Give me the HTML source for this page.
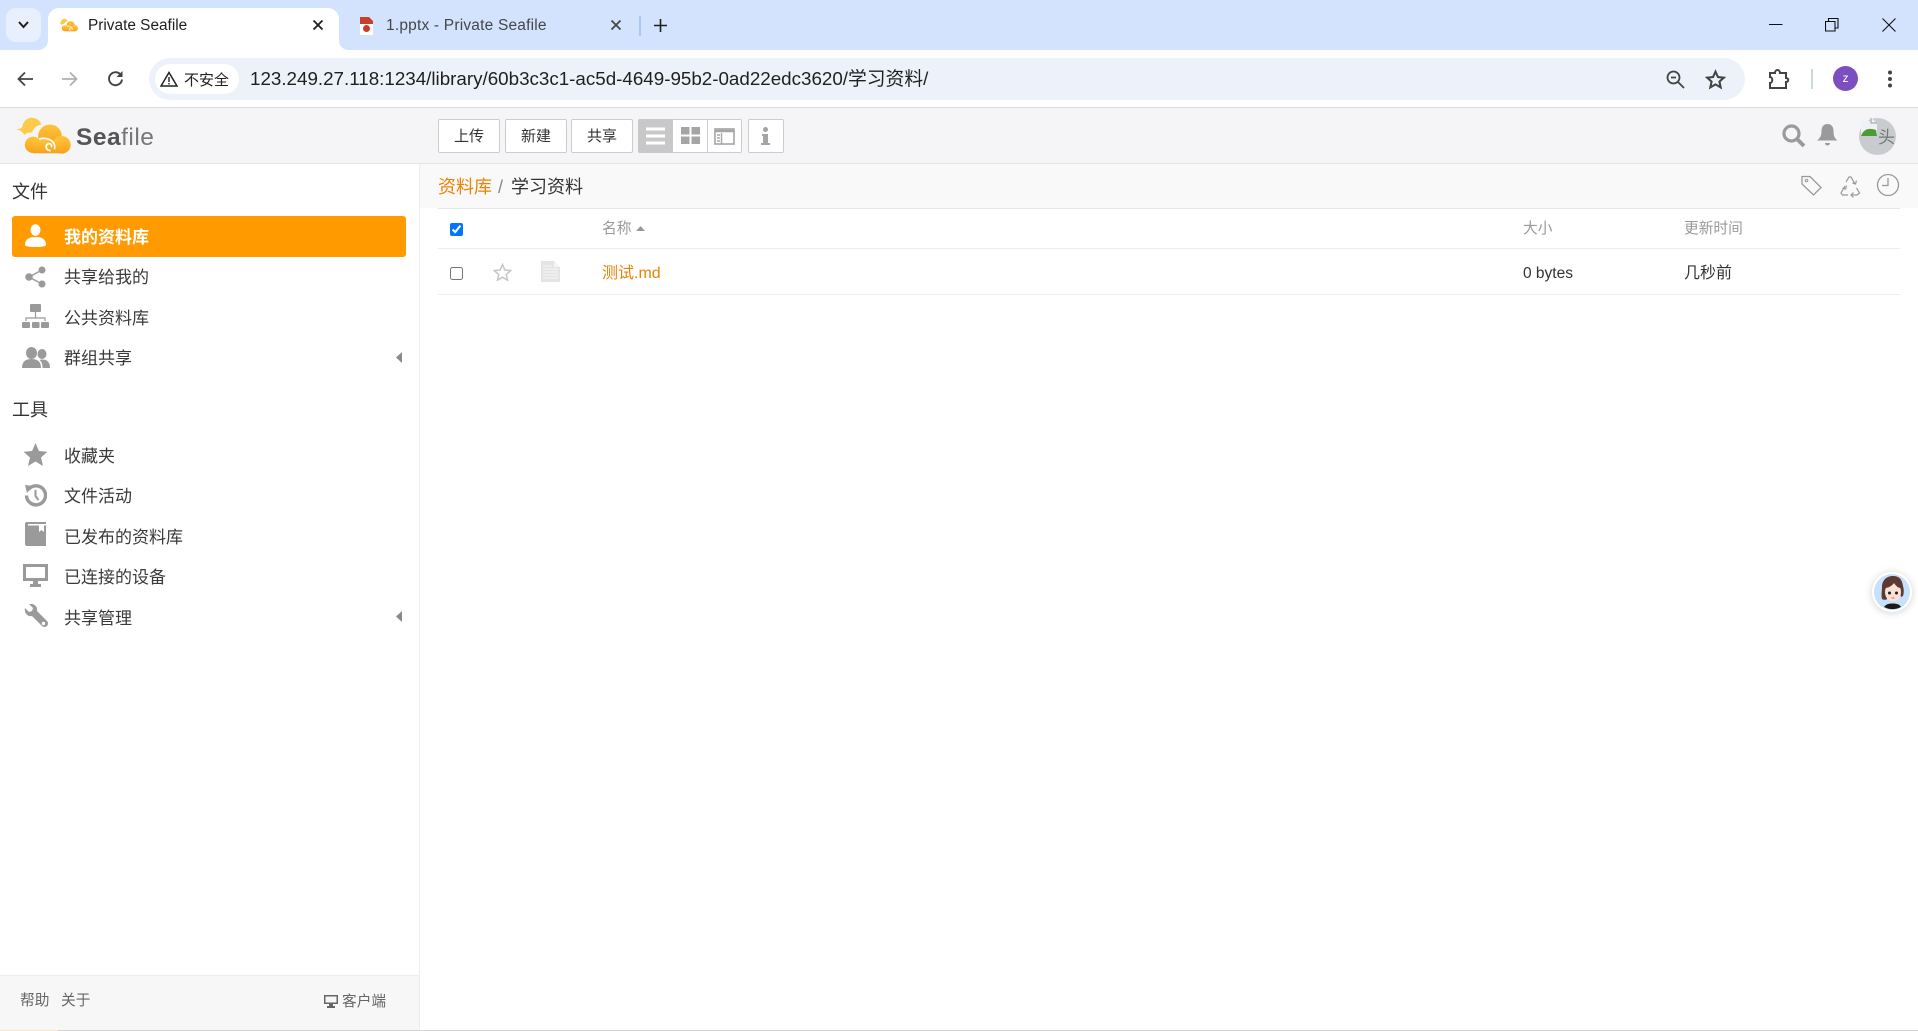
<!DOCTYPE html>
<html lang="zh"><head><meta charset="utf-8"><title>Private Seafile</title>
<style>
html,body{margin:0;padding:0;width:1918px;height:1031px;overflow:hidden;background:#fff}
body{position:relative;font-family:"Liberation Sans","Noto Sans CJK SC",sans-serif;color:#333}
.a,.t,svg{position:absolute}
.t{white-space:nowrap;line-height:24px;height:24px}
.s{font-size:17px;color:#3a3a3a;left:64px}
.b{position:absolute;top:119px;height:32px;background:#fff;border:1px solid #ccc;border-radius:2px;text-align:center;line-height:34px;font-size:15px;color:#333}
</style></head><body>
<svg width="0" height="0" style="position:absolute"><defs>
<linearGradient id="g" x1="0" y1="0" x2="0" y2="1"><stop offset="0" stop-color="#fdc43a"/><stop offset="1" stop-color="#f9a01e"/></linearGradient>
<symbol id="logo" viewBox="20 15 175 115">
<path fill="#fdca4a" d="M25 55c8-1 14-3 19-8 1-15 13-27 27-27 14 0 25 8 29 20-14 2-24 11-28 24-9-1-17 1-23 7-3-9-12-15-24-16z"/>
<circle cx="125" cy="75" r="35" fill="url(#g)"/><circle cx="160" cy="100" r="26" fill="url(#g)"/><circle cx="75" cy="100" r="24" fill="url(#g)"/><rect x="75" y="85" width="85" height="40" fill="url(#g)"/>
<path fill="none" stroke="#fff" stroke-width="5" d="M127 117c-9 0-14-6-13-13 1-6 7-9 12-7 4 2 5 7 2 9M93 83c14-4 30-2 39 7 7 7 9 16 6 23"/>
</symbol>
</defs></svg>

<!-- tab strip -->
<div class="a" style="left:0;top:0;width:1918px;height:50px;background:#d3e3fd"></div>
<div class="a" style="left:6px;top:8px;width:35px;height:34px;background:#e8f0fe;border-radius:10px"></div>
<svg style="left:17px;top:20px" width="13" height="10" viewBox="0 0 13 10"><path d="M2 2l4.500 5L11 2" fill="none" stroke="#1f1f1f" stroke-width="2"/></svg>
<div class="a" style="left:48px;top:8px;width:291px;height:42px;background:#fff;border-radius:11px 11px 0 0"></div>
<svg class="a" style="left:38px;top:40px" width="10" height="10"><path d="M0 10C6 10 10 6 10 0V10Z" fill="#fff"/></svg>
<svg class="a" style="left:339px;top:40px" width="10" height="10"><path d="M10 10C4 10 0 6 0 0V10Z" fill="#fff"/></svg>
<svg style="left:58px;top:18px" width="21" height="14"><use href="#logo" width="21" height="14"/></svg>
<div class="t" style="left:88px;top:14px;font-size:15.400px;color:#1f1f1f">Private Seafile</div>
<svg style="left:312px;top:19px" width="12" height="12"><path d="M1.500 1.500l9 9m0-9l-9 9" stroke="#1f1f1f" stroke-width="1.800"/></svg>
<svg style="left:359px;top:17px" width="15" height="18" viewBox="0 0 15 18"><rect x="1" y="6" width="13" height="12" fill="#fff"/><path d="M1 0h9l4 4v3H1z" fill="#c8402a"/><circle cx="7.500" cy="11.500" r="3.500" fill="#d0392a"/></svg>
<div class="t" style="left:386px;top:14px;font-size:15.500px;color:#44474a;letter-spacing:.2px">1.pptx - Private Seafile</div>
<svg style="left:610px;top:19px" width="12" height="12"><path d="M1.500 1.500l9 9m0-9l-9 9" stroke="#444" stroke-width="1.700"/></svg>
<div class="a" style="left:639px;top:16px;width:2px;height:20px;background:#a8c7fa"></div>
<svg style="left:654px;top:19px" width="13" height="13"><path d="M6.500 0v13M0 6.500h13" stroke="#1f1f1f" stroke-width="1.600"/></svg>
<svg style="left:1769px;top:18px" width="14" height="14"><path d="M0 6.500h13.500" stroke="#111" stroke-width="1"/></svg>
<svg style="left:1825px;top:18px" width="14" height="14"><path d="M.5 3.500h9.500v9.500H.5zM3.500 3.500V.5h9.500v9.500H10" fill="none" stroke="#111" stroke-width="1.100"/></svg>
<svg style="left:1882px;top:18px" width="14" height="14"><path d="M.5.500l13 13m0-13l-13 13" stroke="#111" stroke-width="1.100"/></svg>

<!-- toolbar -->
<div class="a" style="left:0;top:50px;width:1918px;height:58px;background:#fff;border-radius:12px 12px 0 0;border-bottom:1px solid #dcdcdc;box-sizing:border-box"></div>
<svg style="left:15px;top:69px" width="20" height="20"><path d="M18 10H4M10 3.500L3.500 10l6.500 6.500" fill="none" stroke="#444" stroke-width="1.800"/></svg>
<svg style="left:60px;top:69px" width="20" height="20"><path d="M2 10h14M10 3.500l6.500 6.500-6.500 6.500" fill="none" stroke="#b0b0b0" stroke-width="1.800"/></svg>
<svg style="left:106px;top:69px" width="20" height="20"><path d="M16 10.500a6.500 6.500 0 1 1-2-5.500" fill="none" stroke="#444" stroke-width="1.900"/><path d="M16.500 2v6h-6z" fill="#444"/></svg>
<div class="a" style="left:149px;top:58px;width:1596px;height:42px;background:#edf2fa;border-radius:21px"></div>
<div class="a" style="left:155px;top:64px;width:84px;height:30px;background:#fff;border-radius:15px"></div>
<svg style="left:160px;top:71px" width="18" height="16"><path d="M9 1.500L17 15H1z" fill="none" stroke="#222" stroke-width="1.500"/><path d="M9 6v5M9 12v1.500" stroke="#222" stroke-width="1.400"/></svg>
<div class="t" style="left:184px;top:69px;font-size:15px;color:#222">不安全</div>
<div class="t" style="left:250px;top:67px;font-size:18.800px;color:#1f1f1f">123.249.27.118:1234/library/60b3c3c1-ac5d-4649-95b2-0ad22edc3620/学习资料/</div>
<svg style="left:1666px;top:70px" width="19" height="19"><circle cx="7.500" cy="7.500" r="6" fill="none" stroke="#444" stroke-width="1.800"/><path d="M12 12l6 6M5 7.500h5" stroke="#444" stroke-width="1.800"/></svg>
<svg style="left:1705px;top:69px" width="21" height="21" viewBox="0 0 24 24"><path d="M12 3l2.800 6.200 6.700.7-5 4.500 1.400 6.600-5.900-3.400-5.900 3.400 1.400-6.600-5-4.500 6.700-.7z" fill="none" stroke="#444" stroke-width="2.400"/></svg>
<svg style="left:1768px;top:68px" width="23" height="21" viewBox="0 0 23 21"><path d="M2 5h5c0-4 5-4 5 0h6v5c3 0 3 4 0 4v6H2v-5c3 0 3-6 0-6z" fill="none" stroke="#444" stroke-width="2"/></svg>
<div class="a" style="left:1811px;top:69px;width:1.500px;height:20px;background:#c9d7ee"></div>
<div class="a" style="left:1833px;top:66px;width:25px;height:25px;border-radius:50%;background:#7b4fc0;color:#fff;font-size:12px;line-height:25px;text-align:center">z</div>
<svg style="left:1886px;top:69px" width="8" height="20"><circle cx="4" cy="3.500" r="2" fill="#444"/><circle cx="4" cy="10" r="2" fill="#444"/><circle cx="4" cy="16.500" r="2" fill="#444"/></svg>

<!-- app header -->
<div class="a" style="left:0;top:108px;width:1918px;height:56px;background:#f5f5f7;border-bottom:1px solid #e4e4e4;box-sizing:border-box"></div>
<svg style="left:14px;top:116px" width="60" height="39"><use href="#logo" width="60" height="39"/></svg>
<div class="t" style="left:76px;top:124px;font-size:24.500px;line-height:28px;height:28px;color:#555;letter-spacing:.5px"><span style="font-weight:700">Sea</span><span style="color:#777">file</span></div>
<div class="b" style="left:438px;width:60px">上传</div>
<div class="b" style="left:505px;width:60px">新建</div>
<div class="b" style="left:571px;width:60px">共享</div>
<div class="a" style="left:638px;top:119px;width:104px;height:34px;background:#fff;border:1px solid #ccc;border-radius:2px;box-sizing:border-box"></div>
<div class="a" style="left:638px;top:119px;width:35px;height:34px;background:#c8c8c8;border-radius:2px 0 0 2px"></div>
<div class="a" style="left:707px;top:119px;width:1px;height:34px;background:#ccc"></div>
<svg style="left:646px;top:127px" width="19" height="18"><path d="M0 2h19M0 9h19M0 16h19" stroke="#fff" stroke-width="3"/></svg>
<svg style="left:681px;top:127px" width="19" height="17"><path d="M0 0h8.500v7.500H0zM10.500 0H19v7.500h-8.500zM0 9.500h8.500V17H0zM10.500 9.500H19V17h-8.500z" fill="#a5a5a5"/></svg>
<svg style="left:714px;top:128px" width="21" height="17"><rect x="1" y="1" width="19" height="15" fill="none" stroke="#a5a5a5" stroke-width="1.600"/><path d="M1 3h19" stroke="#a5a5a5" stroke-width="2.500"/><path d="M7.500 5v11M3 7h3M3 10h3M3 13h3" stroke="#a5a5a5" stroke-width="1.400"/></svg>
<div class="b" style="left:748px;width:34px"></div>
<svg style="left:761px;top:127px" width="9" height="18"><circle cx="4.500" cy="2.500" r="2.500" fill="#a5a5a5"/><path d="M1 7h6v9h2v2H0v-2h2V9H1z" fill="#a5a5a5"/></svg>
<svg style="left:1782px;top:124px" width="25" height="24"><circle cx="9.500" cy="9.500" r="7.500" fill="none" stroke="#9a9a9a" stroke-width="3.200"/><path d="M15 15l7 7" stroke="#9a9a9a" stroke-width="4"/></svg>
<svg style="left:1817px;top:123px" width="21" height="23"><path d="M10.500 1c4 0 6 3 6 7 0 5 1 7 4 9.500H0C3 15 4.500 13 4.500 8c0-4 2-7 6-7z" fill="#9a9a9a"/><path d="M8 20h5a2.500 2.500 0 0 1-5 0z" fill="#9a9a9a"/></svg>
<div class="a" style="left:1859px;top:118px;width:37px;height:37px;border-radius:50%;background:#c9ccce"></div>
<svg style="left:1860px;top:118px" width="19" height="19"><path d="M1 3h10V0l6 5v13H1z" fill="#eef2f7"/><path d="M1 18c2-6 7-9 15-6l1 6z" fill="#4f9a32"/><path d="M11 0v5h6" fill="none" stroke="#999"/></svg>
<div class="t" style="left:1878px;top:126px;font-size:17px;color:#777">头</div>

<!-- sidebar -->
<div class="a" style="left:419px;top:164px;width:1px;height:867px;background:#ededed"></div>
<div class="t" style="left:12px;top:180px;font-size:18px;color:#333">文件</div>
<div class="a" style="left:12px;top:216px;width:394px;height:41px;background:#ff9a00;border-radius:3px"></div>
<svg style="left:25px;top:224px" width="21" height="23"><ellipse cx="10.500" cy="6" rx="5" ry="5.800" fill="#fff"/><path d="M0 21c0-6 4-8 10.500-8S21 15 21 21c0 1-3 2-10.500 2S0 22 0 21z" fill="#fff"/></svg>
<div class="t s" style="top:226px;color:#fff;font-weight:700">我的资料库</div>
<svg style="left:25px;top:266px" width="21" height="22"><path d="M4 11L17 4M4 11l13 7" stroke="#9a9a9a" stroke-width="1.400"/><circle cx="4" cy="11" r="3.800" fill="#9a9a9a"/><circle cx="17" cy="4" r="3.500" fill="#9a9a9a"/><circle cx="17" cy="18" r="3.500" fill="#9a9a9a"/></svg>
<div class="t s" style="top:266px">共享给我的</div>
<svg style="left:22px;top:304px" width="27" height="24"><rect x="8" y="0" width="11" height="8" rx="1" fill="#9a9a9a"/><path d="M13.500 8v6M4 17v-3h19v3" fill="none" stroke="#9a9a9a" stroke-width="1.200"/><rect x="0" y="18" width="8" height="6" rx="1" fill="#9a9a9a"/><rect x="10" y="18" width="7.500" height="6" rx="1" fill="#9a9a9a"/><rect x="19" y="18" width="8" height="6" rx="1" fill="#9a9a9a"/></svg>
<div class="t s" style="top:307px">公共资料库</div>
<svg style="left:22px;top:347px" width="28" height="21"><ellipse cx="9.500" cy="6" rx="5.500" ry="6" fill="#9a9a9a"/><ellipse cx="20" cy="7" rx="4.500" ry="5" fill="#9a9a9a"/><path d="M0 21c0-6 3-9 9.500-9S19 15 19 21z" fill="#9a9a9a"/><path d="M20.500 21c0-4-1-6.500-3-8 1-.500 2-.500 3-.500 5 0 7.500 3 7.500 8.500z" fill="#9a9a9a"/></svg>
<div class="t s" style="top:347px">群组共享</div>
<svg style="left:396px;top:352px" width="6" height="11"><path d="M6 0v11L0 5.500z" fill="#8a8a8a"/></svg>

<div class="t" style="left:12px;top:398px;font-size:18px;color:#333">工具</div>
<svg style="left:23px;top:443px" width="25" height="23" viewBox="0 0 25 23"><path d="M12.500 0l3.400 8 8.600.8-6.500 5.700 2 8.500-7.500-4.500L5 23l2-8.500L.500 8.800 9.100 8z" fill="#9a9a9a"/></svg>
<div class="t s" style="top:445px">收藏夹</div>
<svg style="left:24px;top:484px" width="23" height="23"><path d="M4.500 5.500a9.500 9.500 0 1 1-2 6" fill="none" stroke="#9a9a9a" stroke-width="3.400"/><path d="M1 1l8 1-6 7z" fill="#9a9a9a"/><path d="M11.500 6v6l3 4" fill="none" stroke="#9a9a9a" stroke-width="2"/></svg>
<div class="t s" style="top:485px">文件活动</div>
<svg style="left:25px;top:522px" width="21" height="24"><path d="M2 0h19v2H3v1.500h18V24H2a2 2 0 0 1-2-2V2a2 2 0 0 1 2-2z" fill="#9a9a9a"/><path d="M14 3.500h5V10l-2.500-2L14 10z" fill="#fff"/></svg>
<div class="t s" style="top:526px">已发布的资料库</div>
<svg style="left:23px;top:564px" width="25" height="23"><path d="M0 0h25v17H15v3h3v3H7v-3h3v-3H0zM3 3v11h19V3z" fill="#9a9a9a"/></svg>
<div class="t s" style="top:566px">已连接的设备</div>
<svg style="left:24px;top:604px" width="24" height="24" viewBox="0 0 24 24"><path d="M1 4l4 4 3-1 1-3-4-4c4-1 9 2 8 7l10 10a3.500 3.500 0 0 1-5 5L8 12C3 13 0 8 1 4z" fill="#9a9a9a"/><circle cx="19.500" cy="19.500" r="1.700" fill="#fff"/></svg>
<div class="t s" style="top:607px">共享管理</div>
<svg style="left:396px;top:611px" width="6" height="11"><path d="M6 0v11L0 5.500z" fill="#8a8a8a"/></svg>

<div class="a" style="left:0;top:975px;width:419px;height:55px;background:#f7f7f7;border-top:1px solid #eee;box-sizing:border-box"></div>
<div class="t" style="left:20px;top:989px;font-size:14.700px;color:#666">帮助</div>
<div class="t" style="left:61px;top:989px;font-size:14.700px;color:#666">关于</div>
<svg style="left:324px;top:995px" width="14" height="13"><path d="M0 0h14v9H9v2h2v2H3v-2h2V9H0zM1.500 1.500v6h11v-6z" fill="#666"/></svg>
<div class="t" style="left:342px;top:990px;font-size:14.700px;color:#666">客户端</div>
<div class="a" style="left:0;top:1030px;width:1918px;height:1px;background:#d2d2d2"></div>
<div class="a" style="left:0;top:1030px;width:58px;height:1px;background:#f3e9d2"></div>

<!-- breadcrumb -->
<div class="a" style="left:420px;top:164px;width:1498px;height:44px;background:#f9f9f9"></div>
<div class="a" style="left:438px;top:208px;width:1462px;height:1px;background:#e6e6e6"></div>
<div class="t" style="left:438px;top:175px;font-size:18px;color:#eb8205">资料库</div>
<div class="t" style="left:498px;top:175px;font-size:18px;color:#888">/</div>
<div class="t" style="left:511px;top:175px;font-size:18px;color:#333">学习资料</div>
<svg style="left:1800px;top:174px" width="23" height="23"><path d="M2 2.500h8l11 11-7.500 7.500L2 10z" fill="none" stroke="#999" stroke-width="1.300"/><circle cx="6.500" cy="6.500" r="1.300" fill="none" stroke="#999"/></svg>
<svg style="left:1839px;top:175px" width="22" height="23" viewBox="0 0 22 23"><path d="M7 7l3-5h2l4 7M13.500 8l3 1 1-3.500M6 11l-4 7 1.500 2H9M7.500 10.500L6.500 14 3.500 13M12 20h6l2.500-2-3-5M14.500 17.500L12 20l2.500 2.500" fill="none" stroke="#999" stroke-width="1.200"/></svg>
<svg style="left:1876px;top:173px" width="24" height="24"><circle cx="12" cy="12" r="10.500" fill="none" stroke="#999" stroke-width="1.300"/><path d="M12 5v7.500H6" fill="none" stroke="#999" stroke-width="1.300"/></svg>

<!-- table -->
<div class="a" style="left:438px;top:248px;width:1462px;height:1px;background:#eee"></div>
<div class="a" style="left:438px;top:294px;width:1462px;height:1px;background:#eee"></div>
<input type="checkbox" checked style="position:absolute;left:450px;top:223px;width:13px;height:13px;margin:0">
<div class="t" style="left:602px;top:217px;font-size:14.700px;color:#999">名称</div>
<svg style="left:636px;top:226px" width="9" height="5"><path d="M0 5L4.500 0 9 5z" fill="#999"/></svg>
<div class="t" style="left:1523px;top:217px;font-size:14.700px;color:#999">大小</div>
<div class="t" style="left:1684px;top:217px;font-size:14.700px;color:#999">更新时间</div>
<input type="checkbox" style="position:absolute;left:450px;top:267px;width:13px;height:13px;margin:0">
<svg style="left:493px;top:263px" width="19" height="18" viewBox="0 0 24 23"><path d="M12 2l3 7 7.500.7-5.700 5 1.700 7.300-6.500-3.900L5.500 22l1.700-7.300-5.700-5L9 9z" fill="none" stroke="#c8c8c8" stroke-width="2"/></svg>
<svg style="left:541px;top:261px" width="19" height="21"><path d="M0 0h13l6 6v15H0z" fill="#e4e4e4"/><path d="M13 0v6h6z" fill="#f5f5f5"/><path d="M2 5h9M2 8h15M2 11h15M2 14h15M2 17h15" stroke="#f8f8f8"/></svg>
<div class="t" style="left:602px;top:262px;font-size:16px;color:#eb8205">测试.md</div>
<div class="t" style="left:1523px;top:262px;font-size:15.500px;color:#333">0 bytes</div>
<div class="t" style="left:1684px;top:262px;font-size:16px;color:#333">几秒前</div>

<!-- floating avatar -->
<svg style="left:1871px;top:571px;filter:drop-shadow(0 1px 4px rgba(0,0,0,.18))" width="42" height="42" viewBox="0 0 42 42">
<circle cx="21" cy="21" r="20" fill="#fff"/><circle cx="21" cy="21" r="18" fill="#c7e0fb"/>
<path d="M22 5c-7 0-11 5-11 11 0 4-1 8 0 12 2 1 4 1 5 0l0-10 12-2 2 10 2-1c1-3 1-7 0-10-1-7-4-10-10-10z" fill="#5a3a32"/>
<ellipse cx="22" cy="21" rx="8" ry="9.500" fill="#fbe1d6"/><path d="M14 17c3 0 7-2 9-5 2 3 4 5 7 5l0-4-8-3-7 2z" fill="#5a3a32"/>
<circle cx="18.500" cy="22" r="1.500" fill="#2a1a18"/><circle cx="25.500" cy="22" r="1.500" fill="#2a1a18"/><path d="M20.500 27h3" stroke="#d66" stroke-width="1"/>
<path d="M13 36c2-3 5-3.500 8.500-3.500s7 .500 8.500 3.500a18 18 0 0 1-17 0z" fill="#1a1a1a"/></svg>
</body></html>
